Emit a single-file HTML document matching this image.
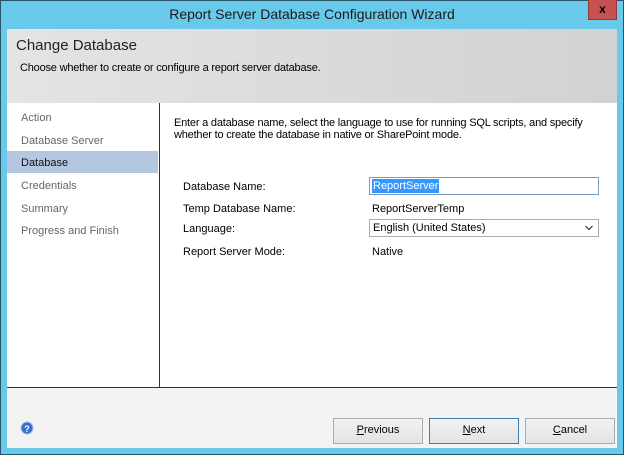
<!DOCTYPE html><html><head><style>
*{margin:0;padding:0;box-sizing:border-box}
body{width:624px;height:455px;background:#69c9ea;position:relative;overflow:hidden;font-family:"Liberation Sans",sans-serif;font-size:11px;color:#000}
.abs{position:absolute}
#frame{left:0;top:0;width:624px;height:455px;border:1px solid #2a5566}
#title{left:0;top:6px;width:624px;text-align:center;font-size:14px;color:#1a1a1a}
#close{left:588px;top:0;width:29px;height:20px;background:#c75050;border:1px solid #8e3a3a;border-top:none;color:#000;font-weight:bold;text-align:center;font-size:12px;line-height:19px}
#head{left:7px;top:29px;width:610px;height:74px;background:linear-gradient(90deg,#e4e4e4,#d2d2d2)}
#main{left:7px;top:103px;width:610px;height:284px;background:#fff}
#bot{left:7px;top:387px;width:610px;height:61px;background:#f3f3f3;border-top:1px solid #333}
.nav{left:21px;color:#666;font-size:11px}
.btn{top:418px;width:90px;height:26px;background:linear-gradient(#f2f2f2,#e3e3e3);border:1px solid #acacac;text-align:center;line-height:23px;font-size:11px}
</style></head><body>
<div class="abs" id="frame"></div>
<div class="abs" id="title">Report Server Database Configuration Wizard</div>
<div class="abs" id="close">x</div>
<div class="abs" id="head"></div>
<div class="abs" style="left:16px;top:37px;font-size:15px;color:#222">Change Database</div>
<div class="abs" style="left:20px;top:62px;font-size:11px;letter-spacing:-0.2px">Choose whether to create or configure a report server database.</div>
<div class="abs" id="main"></div>
<div class="abs" style="left:159px;top:103px;width:1px;height:284px;background:#333"></div>
<div class="abs" style="left:7px;top:151px;width:151px;height:22px;background:#b3c7e1"></div>
<div class="abs nav" style="top:112px">Action</div>
<div class="abs nav" style="top:135px">Database Server</div>
<div class="abs nav" style="top:157px;color:#111">Database</div>
<div class="abs nav" style="top:180px">Credentials</div>
<div class="abs nav" style="top:203px">Summary</div>
<div class="abs nav" style="top:225px">Progress and Finish</div>
<div class="abs" style="left:174px;top:117px;line-height:12px;width:440px;letter-spacing:-0.2px">Enter a database name, select the language to use for running SQL scripts, and specify<br>whether to create the database in native or SharePoint mode.</div>
<div class="abs" style="left:183px;top:181px">Database Name:</div>
<div class="abs" style="left:183px;top:203px">Temp Database Name:</div>
<div class="abs" style="left:183px;top:223px">Language:</div>
<div class="abs" style="left:183px;top:246px">Report Server Mode:</div>
<div class="abs" style="left:369px;top:177px;width:230px;height:18px;border:1px solid #7a9cc4;background:#fff"><span style="position:absolute;left:2px;top:1px;background:#3399ff;color:#fff;padding:0 1px;line-height:14px">ReportServer</span></div>
<div class="abs" style="left:372px;top:203px">ReportServerTemp</div>
<div class="abs" style="left:369px;top:219px;width:230px;height:18px;border:1px solid #acacac;background:#fff"><span style="position:absolute;left:3px;top:2px">English (United States)</span><svg style="position:absolute;right:5px;top:5px" width="8" height="6"><path d="M0.5 1L4 4.5L7.5 1" stroke="#333" stroke-width="1.2" fill="none"/></svg></div>
<div class="abs" style="left:372px;top:246px">Native</div>
<div class="abs" id="bot"></div>
<svg class="abs" style="left:20px;top:421px" width="14" height="14"><circle cx="7" cy="7" r="6" fill="#3a6fd0" stroke="#a9c2ea"/><text x="7" y="11" font-size="9" font-weight="bold" fill="#fff" text-anchor="middle" font-family="Liberation Sans">?</text></svg>
<div class="abs btn" style="left:333px"><u>P</u>revious</div>
<div class="abs btn" style="left:429px;border-color:#3c7fb1"><u>N</u>ext</div>
<div class="abs btn" style="left:525px"><u>C</u>ancel</div>
</body></html>
